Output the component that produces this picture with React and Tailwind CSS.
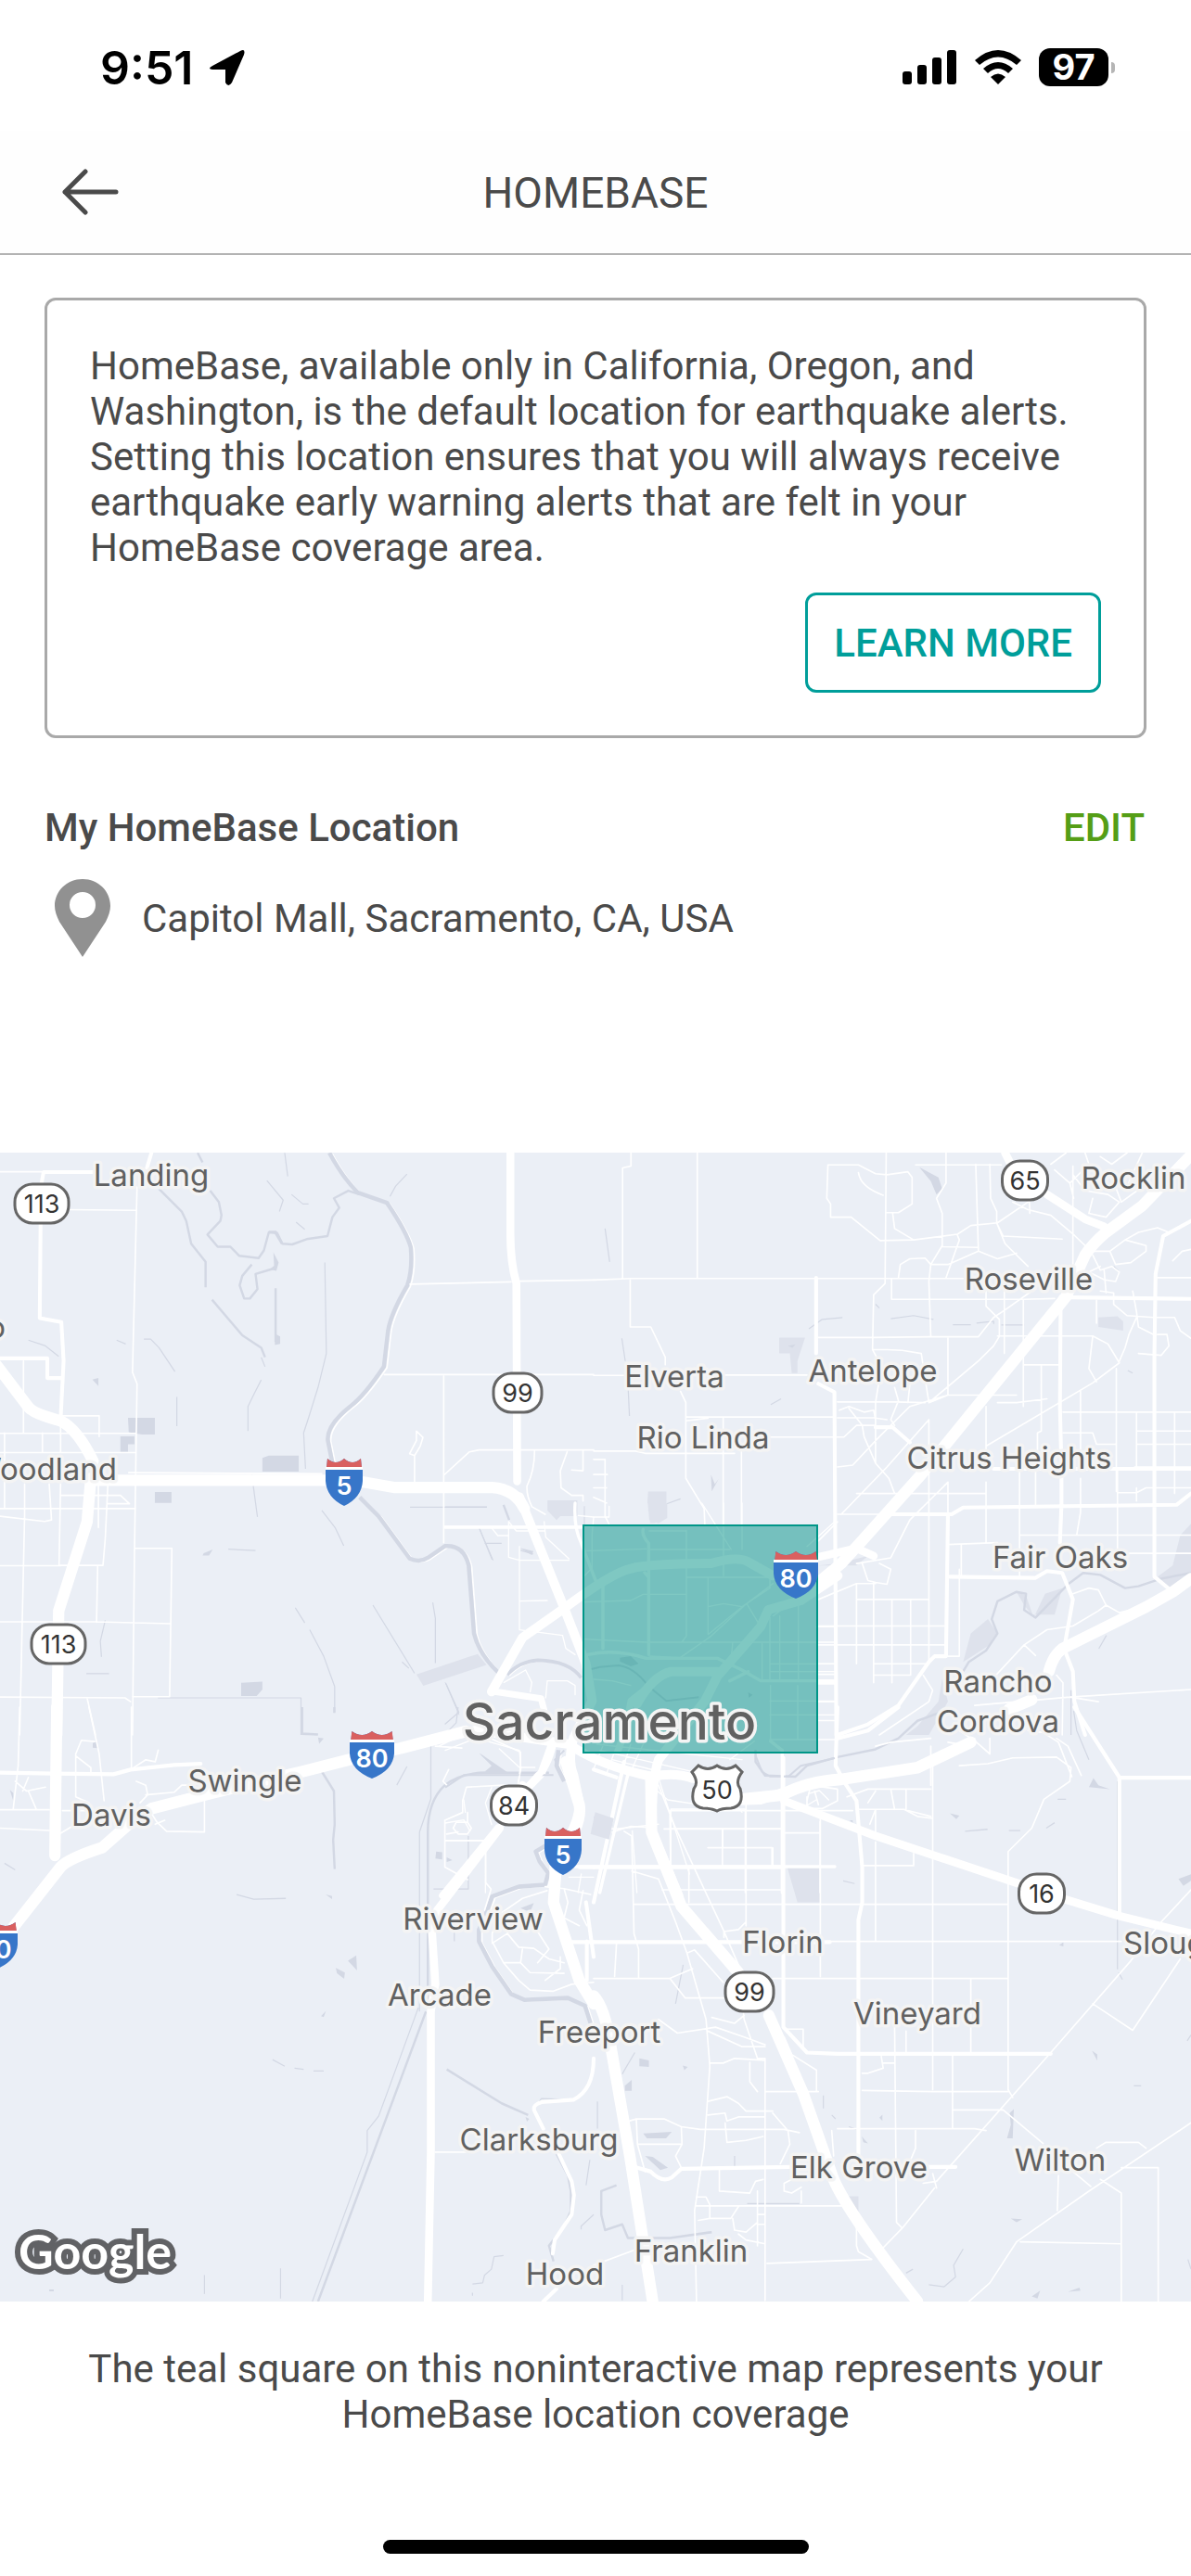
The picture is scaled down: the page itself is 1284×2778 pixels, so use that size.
const TILES = [
  {
    id: "nw",
    transform: "translate(0 -12) scale(.40816)",
    parks: "M1100 1408L1262 1354L1285 1383L1118 1438ZM1446 948H1525V990H1480L1470 1000L1446 975Z",
    ponds:
      "M338 730H409V774H375L340 768ZM318 779H355V800H338V820H318ZM693 836L710 830H789V872H693ZM409 926H453V955H409ZM637 1430L693 1427V1448L678 1465H637ZM244 629L260 625V646ZM726 508L740 515V535L726 538ZM538 1088L562 1078L552 1094H535ZM722 293L736 320L730 342L712 338L724 328ZM710 236H730L748 268L742 272L725 243L710 240Z",
    river:
      "M870 30Q905 95 945 135L1022 162Q1075 240 1085 280Q1090 340 1076 380Q1032 455 1025 500L1014 595Q960 675 925 700Q862 750 866 790L878 850M950 940L1000 990L1082 1102Q1108 1114 1130 1100L1175 1069Q1225 1065 1238 1120L1252 1300Q1266 1356 1318 1405",
    creeks:
      "M420 125L480 185L492 210L505 270L543 318V385M522 30L535 55M555 130L578 160L585 195L582 210L548 246L575 278H608L632 302L683 308L697 288L710 240L732 242L746 270L772 272L810 258L865 250L878 200L896 175L882 150L920 130L950 140M560 418L640 512L690 545L700 570M665 325L640 355L633 380L645 415H660L680 390L675 350L725 335M728 388V530M1330 960L1345 1000",
    brooks:
      "M75 525L120 540L155 568M308 525L332 535M380 522H398L420 545L462 608M467 675V752M858 320L862 560L840 650L815 730L802 770L807 865M665 880L680 992M850 975L885 1020L908 1068M603 1077L675 1081M752 30L760 92M705 103L748 155L738 185M770 140L800 165H815M782 213L805 232M1030 145L1045 118L1075 86M690 570L700 595M690 630L672 665L655 700V765M780 1232L805 1272M818 1290L855 1360L884 1440V1508M985 1225L1095 1405M1143 1218L1150 1260V1378M1062 1375L1080 1392M1178 1432L1212 1508L1175 1540M278 1265L265 1320L268 1362M228 1406H288M417 1470H795V1568M1083 966H1286M1265 1020L1300 1105M1280 1062H1325M1375 1080L1408 1090",
    minor:
      "M0 80H110M180 180L358 182M362 120L350 610L362 640L355 1100L350 1568M62 580V770M0 771H358M12 770V968M112 770V822M160 740V822M165 725H262V780M0 822H358M340 875L850 878M0 970H358M65 905V990M0 990L118 1004L136 1000L130 905M160 935H318L342 957H285M160 905L156 1120H272L278 1050L285 905M0 1121H160M65 990L52 1568M0 1269H255L450 1274M357 1075H454L448 1467H350M258 1121L255 1270M0 1468L330 1470L345 1480M230 1470L252 1568M1083 377L1350 371M1372 369L1568 366M1015 616H1568M1172 620V1060M1095 900V830L1082 825L1100 790V765L1117 782L1110 805L1095 830M1172 882L1240 820L1265 815H1568M1172 1017H1568M1412 818Q1412 870 1392 910Q1390 935 1405 965L1440 985M1498 820L1480 870L1482 915L1510 935H1540V950M1540 818V870L1510 868M260 905V1020",
    arterial:
      "M400 30L388 70M260 81H115L108 120L105 467L162 477L168 580L160 735M0 573H125V625H160",
    highway: "M1348 30V240Q1348 320 1364 375L1366 898",
    freeway:
      "M-10 590L75 702Q90 720 160 738Q205 760 246 845M240 890L230 1005L155 1240L150 1568M235 895H868L960 900L1040 914H1300Q1360 918 1385 970",
  },
  {
    id: "ne",
    transform: "translate(640 -12) scale(.41071 .40816)",
    parks:
      "M487 518H555L535 580V612H520L515 560H487ZM143 925H191V995L160 1008H148V960L141 955ZM1325 465L1375 462L1390 475V500L1325 490ZM1035 1262L1060 1300L1040 1330L970 1375L990 1300ZM1110 1190L1135 1200L1155 1258L1185 1195L1230 1180L1210 1250H1150L1130 1225ZM1568 1010L1540 1040L1520 1120L1480 1150L1510 1190L1568 1155ZM915 1420L905 1480L850 1545L820 1568H880L930 1480ZM590 1120L640 1115L720 1095L690 1120Z",
    ponds: "M855 68L905 95L915 125L900 140L885 105ZM308 880L318 905L328 892L310 924ZM510 540L530 536L522 545Z",
    river: "",
    creeks:
      "M1568 1140L1490 1155L1430 1175L1395 1180L1330 1145L1285 1140L1245 1170L1160 1258L1130 1238L1135 1195L1110 1190L1060 1215L1045 1262L1060 1300L1030 1345L985 1375L970 1400",
    brooks:
      "M30 230L42 318M74 520L83 580M90 640L94 725M565 495L600 470L653 465M465 695L492 680M780 468L840 460L892 470M943 484H990M1005 480L1050 475V482M1070 485H1130M190 958L228 944M1346 1305L1326 1340M740 430L750 440M1402 605L1415 612M1253 1450V1568M1365 330L1378 342",
    minor:
      "M98 30V65L76 70V362M272 30V362M0 366L98 362H970M96 366V490H150L188 570V590M228 660L242 690V890L290 970L292 1012M0 618H80M340 617H560M244 728H632M242 738L300 731M340 731V1012M388 820V1012M0 818H110L135 824H370M465 781H657L690 750H740M615 62H695L740 85L770 88M615 62L612 150L622 165V200H676L752 262L840 260L955 245L990 222L1060 215L1140 160M770 88L825 80L836 95V165L800 188H770M695 82Q700 120 760 142M768 30L765 375L735 405L732 550L748 580M785 190L790 230L840 260M845 62H1070M925 30V110L900 150L915 190V275L885 325L880 370L885 515M1003 60L1010 290M1040 60L1042 150L1058 185V215L1075 250L1230 258M955 248L960 260L925 360M915 278L1010 280M800 360L805 325L830 310L870 308L885 325L930 325L1010 290L1060 310L1110 295M1058 215L1080 270L1140 330M782 362V417H1128L1210 415M590 518H732L880 516H1010L1050 465L1080 445L1150 395M1030 390V435L1065 470V515L1050 540L1010 580L880 690M1078 395V560M1128 417V700M1060 514H1310L1350 535L1380 585L1310 638L1030 805M1372 600V925M1310 515L1300 600L1320 635M1258 65V340M1100 160L1140 180L1200 195L1262 248L1290 275M1140 60L1145 190M930 520V670L880 690L860 560L810 552L770 550L735 550M640 688H790L870 690M640 730H735L770 735M645 710L670 700L710 715L735 710L740 735M670 705L705 750L710 780L740 850L775 890L790 930M748 640L740 690L740 850M790 650L800 685L780 735L790 750M830 640L825 690M640 860L680 855L750 780L830 700L930 670M690 930H1030M640 985H760M650 985L770 860L880 735M880 735V985M930 900V985M1030 870V700M1060 690H1110L1190 680M930 670H1110M1130 590H1222M1175 590L1175 765L1165 770V865M1320 480V420M1232 715H1568M1278 660V865M1425 715V865M1525 715V930M1232 770H1310L1320 800H1370M1425 765H1568M1425 800H1568M1420 860H1568M1118 870V1150M1160 870V960M1278 890V980L1268 1040M1375 865V1090M1425 915V950M1375 928H1425L1450 915H1568M1120 1040H1568M1375 1088H1568M930 1065L1060 1060M965 1065V1150M1030 900V1060M930 900L880 950L830 1000L780 1100L690 1115M705 1115L720 1160L740 1165L770 1170L780 1130L750 1115M590 1055L640 1005M590 1210L690 1168H740M590 1280H920M590 1330H920M690 1168V1380M735 1165V1430M783 1210V1430M832 1210V1410M880 985V1380M690 1210H880M735 1380H880M735 1410H830M590 1380H632M590 1408H632M590 1480H632M590 1530H632M960 1130V1360H925M865 1410L890 1450L880 1480L750 1568M1258 1280L1190 1290L1130 1330L1010 1460M1130 1330L1160 1358M1258 1195L1300 1180L1325 1185L1345 1225L1380 1245L1420 1235L1500 1195M1345 1225L1325 1240L1258 1280M1000 1490L1250 1468L1568 1448M1215 1410L1232 1430L1230 1568M0 840H30V990L40 1010M0 880L36 880M0 915H34M0 940L34 955M1310 290H1355L1395 260L1450 275V290L1410 320L1370 325L1355 290M1310 300L1330 340L1360 330L1380 345L1370 370L1340 365L1300 345L1330 330M1340 340L1345 400M1395 260L1430 240L1480 228L1510 240M1520 315L1545 290L1568 285M1480 360H1568M1330 395L1365 400V430L1400 460L1470 465H1525L1540 500L1568 520M1415 395L1425 450L1430 490L1470 510M1425 465L1405 510L1395 545L1380 580M1480 510H1505L1510 540L1490 565L1430 560M1200 60L1240 30M1210 75L1250 110L1260 150M1250 110L1300 60L1290 30M1260 90L1290 130L1350 140L1380 160L1345 200L1300 190L1310 150M1330 40L1360 60L1400 30M1350 80L1370 120L1385 160L1440 120M1395 130L1440 30M1325 1480L1250 1468",
    arterial:
      "M584 360V560M590 640L632 662L637 1568M1226 410L1224 700L1228 860V960L1224 1060M1250 412L1568 416M1568 210L1495 250L1475 350L1472 560V1150L1520 1190M760 985H940L970 967L1530 960L1568 930M930 985L925 1360H895L880 1375L800 1490L720 1540L640 1568M935 1150L1160 1153L1190 1135L1230 1140L1258 1210L1235 1340L1258 1400L1262 1480L1290 1568M1050 865H1568M740 755H785L830 795M590 1430H632",
    highway: "M1080 30L1095 60M1190 140L1290 205L1340 225M590 1098L690 1075L735 1095",
    freeway:
      "M590 1165L650 1115L700 1060L860 880L1240 410L1290 300Q1310 270 1345 240L1440 170L1568 36M1568 1155L1520 1190L1450 1230L1230 1340Q1205 1360 1195 1400M1150 1475L1090 1500",
  },
  {
    id: "sw",
    transform: "translate(0 598) scale(.40816 .42092)",
    parks: "",
    ponds:
      "M919 650L941 636L943 675ZM887 668L911 680L909 696L890 682ZM840 78L855 80L843 94ZM245 92L257 88V105L245 104ZM1265 118L1335 165H1280L1300 150ZM1152 370L1168 372V390L1150 388ZM1180 385L1195 392L1180 397ZM1375 515L1410 502L1400 525ZM26 212L35 220V240ZM848 792L861 778L855 794ZM860 480L877 484V492ZM1388 1050L1398 1055L1392 1062ZM130 1492H142V1497H130Z",
    river:
      "M1475 110L1470 150L1490 190M1450 350L1415 370L1425 395L1448 425L1440 455L1370 460L1300 485L1280 540L1265 570V600L1300 665L1350 735L1385 750L1500 745L1545 765L1560 810",
    creeks:
      "M798 0V68L840 70M850 165L882 215L884 300L880 340L884 415M1130 760V320Q1130 240 1175 200Q1220 165 1300 168H1450M1125 780L840 1523M883 0V15M1180 928L1325 1015L1395 1045M1470 1145L1500 1200L1508 1240V1290L1490 1330L1450 1380L1462 1420",
    brooks:
      "M625 480L670 492L755 490M12 400L40 417M1048 200L1075 152M720 903L752 920M778 925L802 928M828 932H855M1108 780V320L1138 235V100M1105 770L1000 1048L970 1085V1140L825 1523M1145 466H1237V330M540 1455V1503M741 1438V1515M1210 0L1205 40L1165 80M1330 1405L1305 1408L1298 1440L1280 1455L1275 1475L1248 1478M1248 1500V1508M1558 1160L1548 1225M1568 1300L1535 1330V1338M1200 570V600M1410 1030L1430 1003L1510 1005",
    minor:
      "M52 0L48 150L35 260M0 263H130M0 310L130 316M165 265H230M235 0L262 120L275 240M347 0V160M40 190L70 215L120 205M75 215L95 260M75 180L60 215M250 88L215 85L200 120V230L235 245L240 265M200 125L240 155V170M345 160L385 135L410 140L418 110M360 190L385 200L390 225L370 245M385 225L460 218L480 200H510M365 260L395 265L415 295L440 318L540 320V240M410 300L435 290M155 326L200 300M1175 290L1222 270V240L1232 205L1330 200M1175 290V410L1235 442M1283 360V450L1297 466L1280 520M1175 342H1283M1205 295H1235L1245 310L1235 325H1210L1197 310ZM1235 270V295M1180 325L1210 320M1150 1140H1230M1160 100L1200 80L1230 62M1250 60L1375 115V150L1370 190M1150 100L1220 105M1440 460L1490 465L1560 480M1445 470L1380 490L1320 530L1300 580V600L1330 655L1370 700L1400 725L1460 728L1510 710L1568 705M1300 605L1340 580L1360 545M1340 580L1370 615L1410 618L1450 645L1490 655M1380 620L1375 655L1400 680L1490 682M1375 655L1330 655M1490 465L1500 500L1490 540L1530 560M1540 470L1530 520L1550 560M1410 560L1450 620L1420 655M1440 700L1480 670V640M1185 160L1170 190L1180 200",
    arterial:
      "M0 168L140 170L300 172L345 160L460 148L530 145M1568 410H1530M1568 602H1500M1568 640L1548 500M1550 600V700M1568 900Q1568 980 1515 1006L1430 1012Q1405 1020 1412 1035L1435 1080M1476 1145L1510 1215L1516 1250L1510 1300L1465 1365L1460 1400M1470 1490L1435 1523",
    highway: "M1380 200L1360 240M1320 310L1155 520L1140 560L1150 710L1138 780V1140L1130 1523M1460 90L1430 170L1360 240",
    freeway:
      "M150 0L145 380M30 570L160 410Q180 388 270 360L340 300L400 260L560 220L800 165L920 135L1060 105L1230 62M1495 140L1530 250Q1540 300 1470 400L1462 500L1530 700L1568 760",
  },
  {
    id: "se",
    transform: "translate(640 598) scale(.41071 .42092)",
    parks: "M508 410H595V500H535ZM0 280L52 295L40 338L0 325ZM668 1253H695V1302L668 1290Z",
    ponds:
      "M1300 205L1312 182L1325 200L1355 210ZM935 272L960 278L952 287ZM1535 440L1568 428V445L1548 458ZM1308 880L1322 890V906ZM1095 1310L1125 1312L1110 1320ZM1150 1510L1172 1495L1165 1515ZM1245 1498L1275 1487L1278 1495ZM130 1092L205 1088L190 1105H140ZM135 1150L155 1152L195 1180L175 1186ZM120 900L145 905V922L120 920ZM82 970L100 955V983H82ZM234 918L247 922L238 930ZM750 1052L758 1044V1060ZM1092 1040L1103 1030L1100 1105H1085L1095 1070ZM704 1100L720 1118L708 1115ZM1222 610L1233 602V613ZM672 290H680V297Z",
    river: "",
    creeks:
      "M425 110V140L450 175L530 178L560 150L640 128L740 108L800 80L850 35L920 10M60 1225L20 1240V1300L30 1340L75 1325L90 1360H200L310 1345",
    brooks:
      "M1375 190V672M1378 680L1388 698M1218 236H1240M1188 310L1210 296M975 318L1034 313M1090 316H1120M655 445L685 452M235 660L225 710L215 760M603 995V1028M625 1045L635 1055M1418 970H1437M403 1272H540M75 1520V1480M970 1388L945 1430L950 1460L920 1485L880 1480M820 1450L838 1440M1560 1415L1568 1440M1558 855L1568 840M10 1010V1080M75 940L108 885M370 1150V1180M1260 10L1268 60L1300 135M670 1075L690 1082",
    minor:
      "M200 265H680M200 265L202 410M0 310L60 312L170 300M185 312H490M338 312V405M300 360H468V405M250 410V500M105 505H1088M180 468H490M400 240V560M500 322H595V270M595 322V690M740 262V330M740 345V598M825 265L885 280M840 375V405M705 406H840M890 150V980M0 410H20M80 318L100 330L106 580L118 620V695M60 606L55 690M0 695H200L240 745H345M470 695H1088M620 600H1385M200 695L260 670M245 630L265 622L340 705M100 420L170 440L215 550L245 630L295 800L305 920L290 1130L265 1290L270 1523M170 200L215 310L340 570L380 660M380 660L395 800L430 900L450 900V1520M342 590V575L380 570L400 550M170 800L220 835L320 820L395 845L450 865M310 795L370 810L395 790M300 830L390 870L450 870M305 912H340L370 900L450 905M300 1010L350 998L380 1015L400 1035L470 1035M300 1045L345 1040L350 1060L380 1050H450M345 1065L350 1115L400 1110L445 1100M230 1075L280 1082H500L540 1090M110 1055H185L230 1075L232 1120L215 1150L230 1180M95 1060L112 1055L115 1120L135 1190M115 1120H232M450 985H590M430 985L410 960V910M500 845L520 890L585 930V985M500 825H550V870M640 1080H1000L1030 1085M790 815L795 1320L810 1335M820 830V885M990 695V885M942 890V1078M705 938H720L760 925L755 895M760 912H790M705 982L890 985H1088M1088 370V980L1100 1000M1088 370L1150 310L1182 236L1250 190L1253 155L1215 128L1100 130L1035 145L960 150M945 1032H1075L1180 1118M1255 178L1220 90L1180 65L1140 60M1215 80L1245 100L1280 175M900 1232L890 1195M845 1085L845 1130L830 1165M865 1220L900 1215L1200 885L1410 650L1490 550L1568 468M1310 760L1415 828L1540 645M895 1232L810 1335L760 1385M690 1380L695 1395L730 1415L455 1425M690 1300V1380M1568 1065L1300 1240L1110 1370L1040 1475L985 1523M1120 1370L1385 1375M1220 1200L1217 1290M1330 1210L1385 1245V1523M1385 1180H1482V1523M1320 1130L1345 1115H1430L1450 1130M1215 1155L1305 1228M270 1278H650M270 1255H295L305 1275V1310L275 1315M305 1310L360 1310L380 1280M330 1185V1240L410 1245L425 1215L445 1210M365 1310L370 1340L400 1345L430 1320M380 1350L400 1365L450 1375M430 1240V1380M430 1300H450M430 1325H450M500 1240L520 1245L545 1230M530 1205L500 1220V1240M545 1240V1270M470 1040L510 1085L515 1120L490 1170M580 1070L590 1110M625 1085L630 1150M540 985L560 1020M0 1430L110 1390M560 240L570 200L640 210V240L600 260H560V230M580 215L590 250M665 230L720 210H885M720 245L740 215M780 210L790 262M820 210V262M740 100L780 90L885 80M930 90L990 100L1000 80M885 100V200M960 60L1005 90L1040 120V80M690 262H815L850 280L890 285M740 262L725 300",
    arterial:
      "M498 130V820L560 885L640 888H1200M660 195L690 240L705 410V500L695 545V1200M0 410H498M0 602H620M80 140L0 500M1262 0L1380 180V540M1385 181H1568M115 1180L150 1190Q180 1220 205 1205L230 1183L520 1178M870 1178H950M0 160L60 180M640 0L635 150L660 195M640 80L720 60L800 0",
    highway: "M500 240L740 330L1115 452M1235 492L1380 535L1568 580",
    freeway:
      "M150 180L152 320L230 510L380 680M460 790L550 990L630 1210Q670 1300 850 1523M0 740Q30 770 45 870L95 1150L155 1523M395 235L495 225Q560 190 650 185L850 155L990 90",
  },
  {
    id: "downtown",
    transform: "translate(480 378) scale(.33333)",
    parks: "M485 1000L545 1020L530 1088L470 1070ZM655 0H718V48L690 65L660 55Z",
    ponds:
      "M565 500L600 495L625 520L600 528L565 512ZM110 808L200 870H130L150 850ZM240 145L285 155L280 168ZM980 612L994 620L982 630Z",
    river: "M200 555Q240 512 300 508Q400 510 440 565",
    creeks:
      "M470 538L500 530L560 525Q610 530 655 590L715 640L820 628M1003 815L1025 870L1050 884H1110L1150 850L1260 825M0 920L60 880H350M385 800L355 830L370 870",
    brooks: "M0 12H135M110 80L155 185M450 10V70M0 580L45 685",
    minor:
      "M205 60V175L240 185H400M240 140V410L380 428M240 317L330 315M320 60L325 110L400 180M205 60L230 90H320M150 80L170 105H205M430 40L480 45L475 100V210L445 240M480 45L530 45V10M445 155L650 148M780 88V430L765 450M660 90H780M660 150H920M780 240L1050 240V275L960 335L850 425V240M830 0L925 150M900 0V235M960 0V150M450 320L600 315L640 295H780M450 440L650 450H1260M660 495L760 500L860 430L975 325L1060 260M850 335L900 325L960 335M975 325L1020 400M925 500L930 450M1050 370V575M1025 455V575M1082 365V575M1142 300V570M1060 365L1150 300L1260 250M1050 520H1260M1050 545H1260M1200 400H1260M1050 640H1260M1050 685H1260M1050 765H1260M1052 590V765M1140 590V765M380 430L390 470L420 490M330 575H395L420 590V620M330 575L325 630M260 540L280 580L275 610M190 580L260 540M480 570L540 575L600 590M0 800L100 760L240 800L245 860L235 910M175 795L240 855M240 855H290M490 780L960 830M500 800L850 880M540 830L700 870M520 760L480 860M560 770L520 880M600 780L560 900M640 780L590 890M690 890L790 1200M730 990H970M730 990V1175M730 1053H1090M898 1055V1112M850 1115H1060V1175M970 990V1260M1212 1030V1260M660 910L720 960L850 980M540 1065L600 1045L660 1050M605 1060L620 1260M0 1092H130V1260M150 920L130 970L150 1040M60 960L65 1000M0 1035L60 1025L80 1060M1175 940L1210 930L1240 960M1150 990L1200 960M880 900L960 1000M1170 140L1260 60M400 1210H480M440 1200L430 1260M920 830L1000 770",
    arterial:
      "M0 78H440M420 0Q415 80 440 130L490 260M640 85Q635 105 658 130V490M645 225L658 240M510 270V470M460 490Q550 470 650 502H880L960 540L1020 575H1260M920 575L980 545M1090 800V1260M420 1176H1260M590 880L500 1260M1052 770L1090 800",
    highway:
      "M150 608L310 632L325 690M350 780Q330 860 300 880L230 960M170 1050L-10 1270M590 700L600 640L650 600M560 800L600 690",
    freeway:
      "M240 -20L385 340L455 520L475 640L415 760Q395 830 415 880L432 960Q440 1010 400 1080L352 1170V1270M150 610L250 435L385 340Q540 225 600 212Q650 196 860 195Q945 170 980 190L1060 235M-20 762L100 735L400 780Q500 850 670 885Q740 870 800 890M950 962L1020 960L1140 920L1270 890M1270 235L1150 315L1045 345L1020 400Q960 470 880 560L840 640L690 830Q668 890 668 1060L755 1270M880 545H730Q670 560 620 650",
  },
];

const PLACES = [
  ["Landing", 163, 36],
  ["Elverta", 727, 253],
  ["Antelope", 941, 247],
  ["Rio Linda", 758, 319],
  ["Roseville", 1109, 148],
  ["Rocklin", 1222, 39],
  ["Citrus Heights", 1088, 341],
  ["Fair Oaks", 1143, 448],
  ["Rancho", 1076, 582],
  ["Cordova", 1076, 625],
  ["Swingle", 264, 689],
  ["Davis", 120, 726],
  ["Riverview", 510, 838],
  ["Arcade", 474, 920],
  ["Freeport", 646, 960],
  ["Clarksburg", 581, 1076],
  ["Hood", 609, 1221],
  ["Florin", 844, 863],
  ["Vineyard", 989, 940],
  ["Wilton", 1143, 1098],
  ["Elk Grove", 926, 1106],
  ["Franklin", 745, 1196],
  ["Yolo", 6, 200, "end"],
  ["Woodland", 126, 353, "end"],
  ["Sloughhouse", 1211, 864, "start"],
];

const STATE_ROUTES = [
  ["113", 45, 55, 58],
  ["113", 63, 530, 58],
  ["99", 558, 259, 52],
  ["65", 1105, 30, 49],
  ["84", 554, 704, 49],
  ["99", 808, 905, 52],
  ["16", 1123, 799, 49],
];

const INTERSTATES = [
  ["5", 371, 330, 20],
  ["80", 858, 430, 24],
  ["80", 401, 624, 24],
  ["5", 607, 728, 20],
  ["80", -5, 830, 24],
];

const MapTile = ({ tile }) => (
  <g transform={tile.transform}>
    <path d={tile.parks} fill="#dee2ec" />
    <path d={tile.ponds} fill="#d3d8e4" />
    <g fill="none" strokeLinejoin="round">
      <path d={tile.river} stroke="#fff" strokeWidth="4" transform="translate(8 3)" />
      <path d={tile.river} stroke="#d3d8e4" strokeWidth="11" />
      <path d={tile.creeks} stroke="#d3d8e4" strokeWidth="6" />
      <path d={tile.brooks} stroke="#d3d8e4" strokeWidth="3" />
    </g>
    <g fill="none" stroke="#fff" strokeLinejoin="round" strokeLinecap="round">
      <path d={tile.minor} strokeWidth="4" />
      <path d={tile.arterial} strokeWidth="10" />
      <path d={tile.highway} strokeWidth="21" />
      <path d={tile.freeway} strokeWidth="30" />
    </g>
  </g>
);

const StateRoute = ({ label, x, y, width }) => (
  <g transform={`translate(${x} ${y})`}>
    <rect x={-width / 2} y="-21" width={width} height="42" rx="19" fill="#fff" stroke="#666" strokeWidth="3" />
    <text y="10" fontSize="27" fill="#333" textAnchor="middle">{label}</text>
  </g>
);

const Interstate = ({ label, x, y, half }) => (
  <g transform={`translate(${x} ${y})`}>
    <g transform={`scale(${half / 20} 1)`}>
      <path d="M-18 0Q-9 8 0 0Q9 8 18 0L19 12H20V24Q19 42 0 51Q-19 42 -20 24V12H-19Z" fill="#3776c9" />
      <path d="M-18 0Q-9 8 0 0Q9 8 18 0L19 9H-19Z" fill="#d96060" />
      <path d="M-20 9H20V12H-20Z" fill="#fff" />
    </g>
    <text y="39" fontSize="27" fontWeight="600" fill="#fff" textAnchor="middle">{label}</text>
  </g>
);

const CoverageMap = () => (
  <svg
    viewBox="0 0 1284 1239"
    role="img"
    aria-label="HomeBase coverage map"
    className="block w-full bg-[#ebeff6] font-[Inter,sans-serif]"
  >
    {TILES.map((tile) => (
      <MapTile key={tile.id} tile={tile} />
    ))}
    <rect x="629" y="402" width="252" height="245" fill="#009185" fillOpacity=".5" stroke="#009688" strokeWidth="2" />
    <g fill="#616161" stroke="#f4f4f4" strokeWidth="7" strokeLinejoin="round" className="[paint-order:stroke]">
      {PLACES.map(([name, x, y, anchor = "middle"]) => (
        <text key={name} x={x} y={y} fontSize="33" textAnchor={anchor}>{name}</text>
      ))}
      <text x="657" y="633" fontSize="55" fontWeight="500" textAnchor="middle">Sacramento</text>
    </g>
    {STATE_ROUTES.map(([label, x, y, width]) => (
      <StateRoute key={`${label}-${x}`} label={label} x={x} y={y} width={width} />
    ))}
    {INTERSTATES.map(([label, x, y, half]) => (
      <Interstate key={`${label}-${x}`} label={label} x={x} y={y} half={half} />
    ))}
    <g transform="translate(773 659)">
      <path
        d="M-20 2Q-10 9 0 2Q10 9 20 2L27 9Q19 20 25 27Q30 46 15 48Q5 48 0 51Q-5 48 -15 48Q-30 46 -25 27Q-19 20 -27 9Z"
        fill="#fff"
        stroke="#666"
        strokeWidth="3"
      />
      <text y="38" fontSize="27" fill="#333" textAnchor="middle">50</text>
    </g>
    <text
      x="20"
      y="1204"
      fontSize="52"
      fontWeight="700"
      fill="#fff"
      stroke="#616265"
      strokeWidth="12"
      className="font-[Lato,sans-serif] [paint-order:stroke]"
    >
      Google
    </text>
  </svg>
);

const StatusBar = () => (
  <div className="flex h-[141px] items-start justify-between pl-[108px] pr-[82px] pt-[52px] text-black font-[Inter,sans-serif]">
    <div className="flex items-center gap-4">
      <span className="text-[50px] leading-[42px] font-semibold">9:51</span>
      <svg viewBox="0 0 40 40" className="size-10" aria-hidden="true">
        <path d="M4 18L34 2Q40 -1 38 6L25 36Q21 42 18 36V22H4Q-2 21 4 18Z" />
      </svg>
    </div>
    <div className="flex items-center gap-[19px]">
      <svg viewBox="0 0 60 38" className="h-[38px] w-[60px]" aria-hidden="true">
        <rect x="1" y="23" width="10" height="14" rx="3" />
        <rect x="17" y="16" width="10" height="21" rx="3" />
        <rect x="33" y="8" width="10" height="29" rx="3" />
        <rect x="49" y="0" width="10" height="37" rx="3" />
      </svg>
      <svg viewBox="0 0 50 38" className="h-[38px] w-[50px]" aria-hidden="true">
        <path d="M0 11Q25 -11 50 11L45 16Q25 -1 5 16ZM9 20Q25 6 41 20L36 25Q25 15 14 25ZM17 29Q25 22 33 29L25 37Z" />
      </svg>
      <div className="flex items-center gap-[3px]">
        <span className="flex h-[41px] w-[75px] items-center justify-center rounded-xl bg-black text-[38px] font-bold text-white">
          97
        </span>
        <span className="h-3 w-1 rounded-r-full bg-[#b5b5b5]" />
      </div>
    </div>
  </div>
);

const App = () => (
  <div className="flex min-h-screen flex-col bg-white text-[42px] leading-[49px] text-[#4a4a4a] font-[Roboto,sans-serif]">
    <StatusBar />
    <header className="grid h-[134px] grid-cols-[1fr_auto_1fr] items-center border-b-2 border-[#b3b3b3] bg-[#fefefe] px-[66px]">
      <button aria-label="Back" className="w-16">
        <svg viewBox="0 0 64 50" className="h-[50px] w-16" fill="none" stroke="#4a4a4a" strokeWidth="5" strokeLinecap="round" strokeLinejoin="round">
          <path d="M26 3L4 25L26 47M4 25H59" />
        </svg>
      </button>
      <h1 className="pt-[3px] text-[46px]">HOMEBASE</h1>
    </header>

    <main className="flex flex-1 flex-col">
      <section className="mx-12 mt-[46px] flex flex-col items-end gap-6 rounded-xl border-3 border-[#a9a9a9] p-[46px]">
        <p className="w-full">
          HomeBase, available only in California, Oregon, and Washington, is the default location for earthquake
          alerts. Setting this location ensures that you will always receive earthquake early warning alerts that are
          felt in your HomeBase coverage area.
        </p>
        <button className="h-[108px] rounded-xl border-3 border-[#009e9a] px-7 font-medium text-[#009e9a]">
          LEARN MORE
        </button>
      </section>

      <section className="px-12 pt-[72px] pb-[211px]">
        <div className="flex items-center justify-between pr-[2px] font-medium">
          <h2>My HomeBase Location</h2>
          <button className="text-[#559e16]">EDIT</button>
        </div>
        <div className="mt-[31px] flex items-center gap-[34px] pl-[11px]">
          <svg viewBox="0 0 60 84" className="h-[84px] w-[60px]" aria-hidden="true">
            <path
              fill="#919191"
              fillRule="evenodd"
              d="M30 0C13 0 0 13 0 29C0 34 2 40 5 46L30 84L55 46C58 40 60 34 60 29C60 13 47 0 30 0ZM30 14A14 14 0 1 1 30 42A14 14 0 0 1 30 14Z"
            />
          </svg>
          <p>Capitol Mall, Sacramento, CA, USA</p>
        </div>
      </section>

      <CoverageMap />

      <p className="px-20 pt-12 text-center">
        The teal square on this noninteractive map represents your HomeBase location coverage
      </p>
    </main>

    <div className="mx-auto mb-6 h-[15px] w-[459px] rounded-full bg-black" />
  </div>
);

export default App;
